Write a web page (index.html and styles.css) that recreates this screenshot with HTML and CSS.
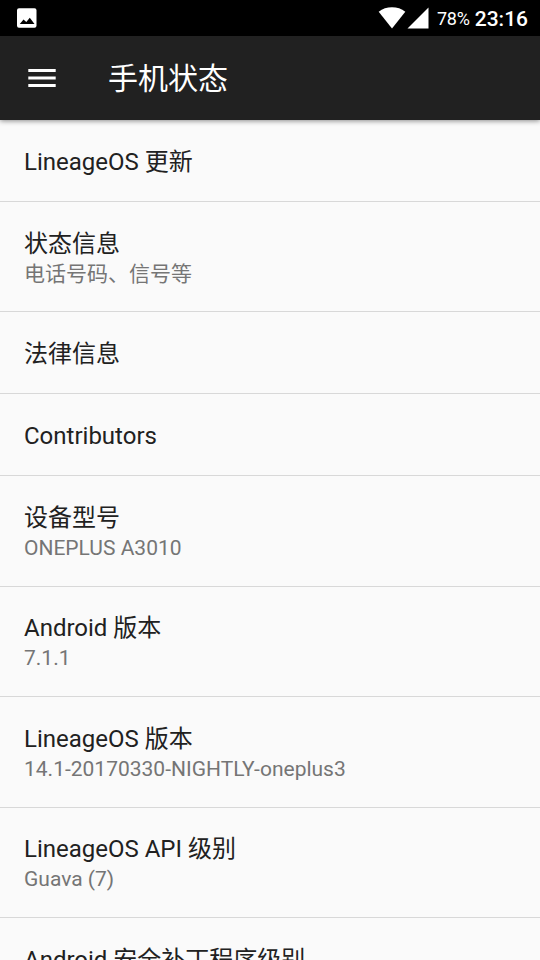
FILE: index.html
```
<!DOCTYPE html>
<html lang="zh-CN">
<head>
  <meta charset="UTF-8">
  <title>手机状态</title>
  <link rel="stylesheet" href="styles.css">
</head>
<body>
  <div class="status-bar">
    <svg class="icon-picture" width="20" height="20" viewBox="0 0 20 20">
      <path fill="#fff" fill-rule="evenodd" d="M2 0.300h15.500a2 2 0 0 1 2 2v15.400a2 2 0 0 1-2 2h-15.500a2 2 0 0 1-2-2v-15.400a2 2 0 0 1 2-2zM2.800 16h14.700l-4.700-6.200-3.500 4.300-2.800-2.600z"/>
    </svg>
    <div class="status-right">
      <svg class="icon-wifi" width="28" height="22" viewBox="0 0 28 22">
        <path fill="#fff" d="M14 21.500L0.700 4.700C4.500 1.600 9 0.300 14 0.300s9.500 1.300 13.300 4.400z"/>
      </svg>
      <svg class="icon-signal" width="22" height="22" viewBox="0 0 22 22">
        <path fill="#fff" d="M0.500 21.500h21v-21z"/>
      </svg>
      <span class="battery">78%</span>
      <span class="clock">23:16</span>
    </div>
  </div>

  <header class="toolbar">
    <svg class="menu-icon" width="28" height="20" viewBox="0 0 28 20">
      <path fill="#fff" d="M0.300 1h27.400v3H0.300zM0.300 8.500h27.400v3H0.300zM0.300 16h27.400v3H0.300z"/>
    </svg>
    <h1>手机状态</h1>
  </header>

  <ul class="list">
    <li class="item"><span class="title">LineageOS 更新</span></li>
    <li class="item two-line"><span class="title">状态信息</span><span class="summary">电话号码、信号等</span></li>
    <li class="item"><span class="title">法律信息</span></li>
    <li class="item"><span class="title">Contributors</span></li>
    <li class="item two-line"><span class="title">设备型号</span><span class="summary">ONEPLUS A3010</span></li>
    <li class="item two-line"><span class="title">Android 版本</span><span class="summary">7.1.1</span></li>
    <li class="item two-line"><span class="title">LineageOS 版本</span><span class="summary">14.1-20170330-NIGHTLY-oneplus3</span></li>
    <li class="item two-line"><span class="title">LineageOS API 级别</span><span class="summary">Guava (7)</span></li>
    <li class="item two-line"><span class="title">Android 安全补丁程序级别</span></li>
  </ul>
</body>
</html>
```

FILE: styles.css
```
* {
  box-sizing: border-box;
}

body {
  margin: 0;
  height: 960px;
  overflow: hidden;
  display: flex;
  flex-direction: column;
  background: #fafafa;
  color: #212121;
  font-family: Roboto, "Noto Sans CJK SC", sans-serif;
}

.status-bar {
  flex: none;
  height: 36px;
  padding: 0 12px 0 17px;
  display: flex;
  align-items: center;
  justify-content: space-between;
  background: #000;
  color: #fff;
}

.status-right {
  display: flex;
  align-items: center;
}

.icon-signal {
  margin-left: 1px;
}

.battery {
  margin: 1px 0 0 8px;
  font-size: 18px;
  letter-spacing: -0.2px;
}

.clock {
  margin: 1px 0 0 5px;
  font-size: 21px;
  font-weight: 500;
}

.toolbar {
  flex: none;
  position: relative;
  height: 84px;
  padding-left: 28px;
  display: flex;
  align-items: center;
  background: #212121;
  color: #fff;
  box-shadow: 0 1px 5px rgba(0, 0, 0, 0.45);
}

.toolbar h1 {
  margin: 2px 0 0 52px;
  font-size: 30px;
  font-weight: 400;
  line-height: 40px;
}

.list {
  flex: none;
  margin: 0;
  padding: 0;
  list-style: none;
}

.item {
  height: 82px;
  padding: 25.6px 24px 0;
  display: flex;
  flex-direction: column;
  border-bottom: 1px solid #d8d8d8;
}

.two-line {
  height: 110.4px;
}

.title {
  font-size: 24px;
  line-height: 32px;
}

.summary {
  font-size: 21px;
  line-height: 29px;
  color: #757575;
}
```
